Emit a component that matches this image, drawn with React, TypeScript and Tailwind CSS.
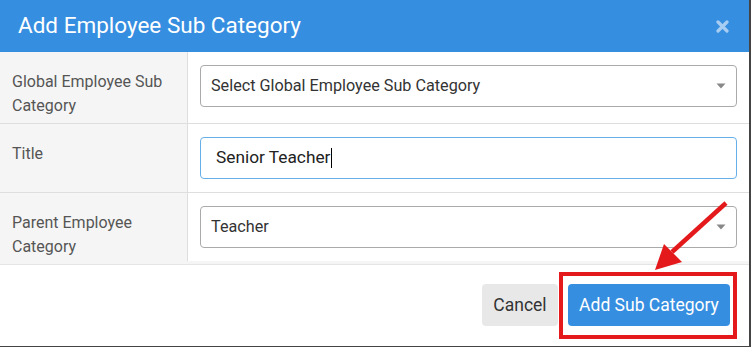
const ROWS = [
  { label: ['Global Employee Sub', 'Category'], kind: 'select', value: 'Select Global Employee Sub Category', h: 'h-[72px]' },
  { label: ['Title'], kind: 'input', value: 'Senior Teacher', h: 'h-[69px]' },
  { label: ['Parent Employee', 'Category'], kind: 'select', value: 'Teacher', h: 'h-[68px]' },
]

function Caret() {
  return (
    <svg width="10" height="6" viewBox="0 0 10 6" className="absolute right-[10px] top-1/2 -translate-y-1/2">
      <path d="M0.5 0.5 L9.5 0.5 L5 5.5 Z" fill="#888" />
    </svg>
  )
}

export default function App() {
  return (
    <div className="w-[751px] h-[347px] bg-[#444] overflow-hidden font-['Roboto',sans-serif]">
      <div className="relative w-[749px] h-[346px] bg-white flex flex-col overflow-hidden">
        {/* header */}
        <div className="h-[52px] shrink-0 bg-[#368ee0] flex items-center justify-between pl-[18px] pr-[20px]">
          <h2 className="text-white text-[22.5px] leading-none pb-[1px]">Add Employee Sub Category</h2>
          <svg width="13" height="13" viewBox="0 0 13 13">
            <path d="M2 2 L11 11 M11 2 L2 11" stroke="#a8cdf2" strokeWidth="3.2" strokeLinecap="round" />
          </svg>
        </div>

        {/* form table */}
        <div className="flex flex-col">
          {ROWS.map((r, i) => (
            <div key={i} className={`flex ${r.h} ${i < ROWS.length - 1 ? 'border-b border-[#dedede]' : ''}`}>
              <div className="w-[188px] shrink-0 bg-[#f5f5f5] border-r border-[#dedede] pl-[12px] pt-[18px] text-[16px] leading-[24px] text-[#555]">
                {r.label.map(l => <div key={l}>{l}</div>)}
              </div>
              <div className="flex-1 pl-[12px] pr-[12px] pt-[13px]">
                {r.kind === 'select' ? (
                  <div className="relative h-[42px] rounded-[4px] border border-[#aaa] flex items-center pl-[10px] text-[16.2px] text-[#333]">
                    {r.value}
                    <Caret />
                  </div>
                ) : (
                  <div className="h-[42px] rounded-[4px] border border-[#66afe9] flex items-center pl-[15px] text-[17.3px] text-[#222]">
                    {r.value}
                    <span className="inline-block w-px h-[20px] bg-black ml-[1px]" />
                  </div>
                )}
              </div>
            </div>
          ))}
        </div>

        {/* footer */}
        <div className="h-[4px] bg-[#f5f5f5] border-b border-[#e5e5e5]" />
        <div className="flex justify-end gap-[10px] pr-[19px] pt-[19px]">
          <button className="h-[42px] w-[76px] rounded-[4px] bg-[#e8e8e8] text-[17.5px] text-[#333]">Cancel</button>
          <button className="h-[42px] w-[162px] rounded-[4px] bg-[#368ee0] text-[17.5px] text-white">Add Sub Category</button>
        </div>

        {/* annotation overlay */}
        <div className="absolute left-[559px] top-[272px] w-[178px] h-[67px] border-4 border-[#e3191c]" />
        <svg className="absolute left-0 top-0 pointer-events-none" width="749" height="346">
          <line x1="726" y1="203" x2="672" y2="252" stroke="#e3191c" strokeWidth="4.5" />
          <path d="M655 270 L664 244 L682 262 Z" fill="#e3191c" />
        </svg>
      </div>
    </div>
  )
}
